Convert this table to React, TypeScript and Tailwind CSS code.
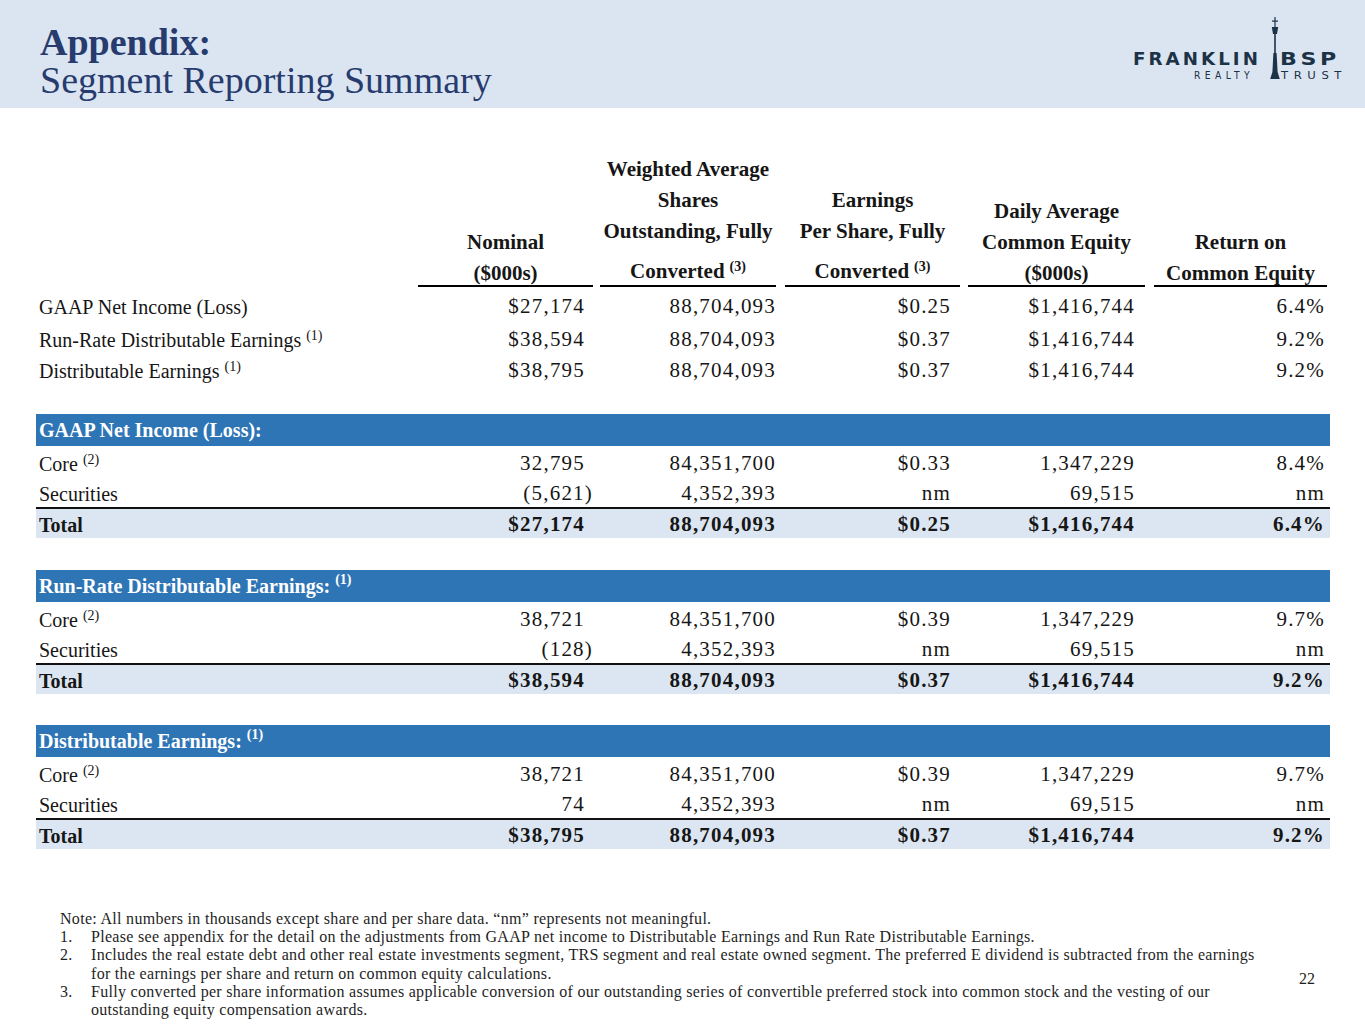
const GRID = 'grid grid-cols-[382px_179px_183px_184px_186px_180px]';
const SERIF = "font-['Liberation_Serif',serif]";

// right padding of the figures in each column
const PR = ['pr-[12px]', 'pr-[4px]', 'pr-[13px]', 'pr-[15px]', 'pr-[5px]'];
// underline inset for each column head
const HEAD_INSET = ['ml-0 mr-[4px]', 'ml-[3px] mr-[4px]', 'ml-[5px] mr-[4px]', 'ml-[4px] mr-[5px]', 'ml-[4px] mr-[3px]'];
const SECTION_GAP = ['', 'mt-[32px]', 'mt-[31px]'];

type Line = { text: string; sup?: string };

const heads: Line[][] = [
  [{ text: 'Nominal' }, { text: '($000s)' }],
  [{ text: 'Weighted Average' }, { text: 'Shares' }, { text: 'Outstanding, Fully' }, { text: 'Converted', sup: '(3)' }],
  [{ text: 'Earnings' }, { text: 'Per Share, Fully' }, { text: 'Converted', sup: '(3)' }],
  [{ text: 'Daily Average' }, { text: 'Common Equity' }, { text: '($000s)' }],
  [{ text: 'Return on' }, { text: 'Common Equity' }]
];

type Row = { label: string; sup?: string; vals: string[]; h: string };

const summary: Row[] = [
  { label: 'GAAP Net Income (Loss)', vals: ['$27,174', '88,704,093', '$0.25', '$1,416,744', '6.4%'], h: 'h-[31px]' },
  { label: 'Run-Rate Distributable Earnings', sup: '(1)', vals: ['$38,594', '88,704,093', '$0.37', '$1,416,744', '9.2%'], h: 'h-[33px] pt-[2px]' },
  { label: 'Distributable Earnings', sup: '(1)', vals: ['$38,795', '88,704,093', '$0.37', '$1,416,744', '9.2%'], h: 'h-[31px]' }
];

type Section = { title: string; sup?: string; core: string[]; securities: string[]; total: string[] };

const sections: Section[] = [
  {
    title: 'GAAP Net Income (Loss):',
    core: ['32,795', '84,351,700', '$0.33', '1,347,229', '8.4%'],
    securities: ['(5,621)', '4,352,393', 'nm', '69,515', 'nm'],
    total: ['$27,174', '88,704,093', '$0.25', '$1,416,744', '6.4%']
  },
  {
    title: 'Run-Rate Distributable Earnings:',
    sup: '(1)',
    core: ['38,721', '84,351,700', '$0.39', '1,347,229', '9.7%'],
    securities: ['(128)', '4,352,393', 'nm', '69,515', 'nm'],
    total: ['$38,594', '88,704,093', '$0.37', '$1,416,744', '9.2%']
  },
  {
    title: 'Distributable Earnings:',
    sup: '(1)',
    core: ['38,721', '84,351,700', '$0.39', '1,347,229', '9.7%'],
    securities: ['74', '4,352,393', 'nm', '69,515', 'nm'],
    total: ['$38,795', '88,704,093', '$0.37', '$1,416,744', '9.2%']
  }
];

function Sup({ children }: { children: string }) {
  return <span className="relative -top-[7px] ml-[5px] text-[14px] tracking-normal">{children}</span>;
}

function Logo() {
  return (
    <svg width="230" height="70" viewBox="0 0 230 70">
      <g fill="#1c3246" fontFamily="'DejaVu Sans', sans-serif">
        <text x="5" y="50" fontSize="18" fontWeight="700" letterSpacing="3" textLength="128" lengthAdjust="spacingAndGlyphs">
          FRANKLIN
        </text>
        <text x="152" y="50" fontSize="18" fontWeight="700" letterSpacing="3" textLength="60" lengthAdjust="spacingAndGlyphs">
          BSP
        </text>
        <text x="66" y="63.5" fontSize="10.5" letterSpacing="5" textLength="60" lengthAdjust="spacingAndGlyphs">
          REALTY
        </text>
        <text x="153" y="63.5" fontSize="10.5" letterSpacing="5" textLength="66" lengthAdjust="spacingAndGlyphs">
          TRUST
        </text>
        {/* lamp post */}
        <rect x="146.4" y="2" width="1.2" height="11" />
        <rect x="144" y="5.5" width="6" height="1.2" />
        <path d="M143.8 12 L150.2 12 L149 19 L145 19 Z" />
        <rect x="146.2" y="19" width="1.6" height="19" />
        <path d="M145.4 38 L148.6 38 L149.6 57 L151.8 64 L142.2 64 L144.4 57 Z" />
      </g>
    </svg>
  );
}

function Num({ v, pr }: { v: string; pr: string }) {
  const neg = v.startsWith('(');
  return (
    <div className={`text-right text-[21px] tracking-[1.2px] ${pr}`}>
      <span className={neg ? '-mr-2' : ''}>{v}</span>
    </div>
  );
}

function DataRow({ label, sup, vals, h, bold }: { label: string; sup?: string; vals: string[]; h: string; bold?: boolean }) {
  return (
    <div className={`${GRID} items-center ${h} ${bold ? 'font-bold' : ''}`}>
      <div className="pl-[3px] whitespace-nowrap">
        {label}
        {sup && <Sup>{sup}</Sup>}
      </div>
      {vals.map((v, i) => (
        <Num key={i} v={v} pr={PR[i]} />
      ))}
    </div>
  );
}

export default function App() {
  return (
    <div className="w-[1365px] h-[1024px] bg-white overflow-hidden text-[#161616]">
      {/* title band */}
      <div className="h-[108px] bg-[#dbe5f1] flex justify-between">
        <div className={`${SERIF} pl-[40px] pt-[23px] text-[38px] leading-[38px] text-[#273b6e]`}>
          <div className="font-bold">Appendix:</div>
          <div>Segment Reporting Summary</div>
        </div>
        <div className="mt-[15px] mr-[7px]">
          <Logo />
        </div>
      </div>

      <div className={`${SERIF} ml-[36px] w-[1294px] text-[20px]`}>
        {/* column heads */}
        <div className={`${GRID} mt-[42px] items-end font-bold text-[21px]`}>
          <div />
          {heads.map((lines, c) => (
            <div key={c} className={`border-b-2 border-black ${HEAD_INSET[c]}`}>
              <div className="flex flex-col items-center translate-y-[4px]">
                {lines.map((l, j) => (
                  <div key={j} className={`whitespace-nowrap leading-[31px] ${l.sup ? 'pt-[9px]' : ''}`}>
                    {l.text}
                    {l.sup && <Sup>{l.sup}</Sup>}
                  </div>
                ))}
              </div>
            </div>
          ))}
        </div>

        {/* summary */}
        <div className="mt-[4px]">
          {summary.map((r) => (
            <DataRow key={r.label} label={r.label} sup={r.sup} vals={r.vals} h={r.h} />
          ))}
        </div>

        {/* segment sections */}
        <div className="mt-[28px] flex flex-col">
          {sections.map((s, i) => (
            <div key={s.title} className={SECTION_GAP[i]}>
              <div className="h-[32px] bg-[#2e75b6] text-white font-bold flex items-center pl-[3px]">
                {s.title}
                {s.sup && <Sup>{s.sup}</Sup>}
              </div>
              <DataRow label="Core" sup="(2)" vals={s.core} h="h-[32px] pt-[2px]" />
              <DataRow label="Securities" vals={s.securities} h="h-[29px]" />
              <div className="h-[2px] bg-[#111]" />
              <div className="bg-[#dce6f2]">
                <DataRow label="Total" vals={s.total} h="h-[29px]" bold />
              </div>
            </div>
          ))}
        </div>
      </div>

      {/* notes */}
      <div className={`${SERIF} mt-[61px] flex justify-between text-[#1e1e1e]`}>
        <div className="pl-[60px] text-[16px] leading-[18.2px] tracking-[0.3px]">
          <div className="whitespace-nowrap">
            Note: All numbers in thousands except share and per share data. “nm” represents not meaningful.
          </div>
          <div className="flex">
            <div className="w-[31px] shrink-0">1.</div>
            <div className="whitespace-nowrap">
              Please see appendix for the detail on the adjustments from GAAP net income to Distributable Earnings and Run Rate Distributable Earnings.
            </div>
          </div>
          <div className="flex">
            <div className="w-[31px] shrink-0">2.</div>
            <div className="whitespace-nowrap">
              <div>
                Includes the real estate debt and other real estate investments segment, TRS segment and real estate owned segment. The preferred E dividend is subtracted from the earnings
              </div>
              <div>for the earnings per share and return on common equity calculations.</div>
            </div>
          </div>
          <div className="flex">
            <div className="w-[31px] shrink-0">3.</div>
            <div className="whitespace-nowrap">
              <div>
                Fully converted per share information assumes applicable conversion of our outstanding series of convertible preferred stock into common stock and the vesting of our
              </div>
              <div>outstanding equity compensation awards.</div>
            </div>
          </div>
        </div>
        <div className="pt-[60px] pr-[50px] text-[16px] leading-[18px]">22</div>
      </div>
    </div>
  );
}
